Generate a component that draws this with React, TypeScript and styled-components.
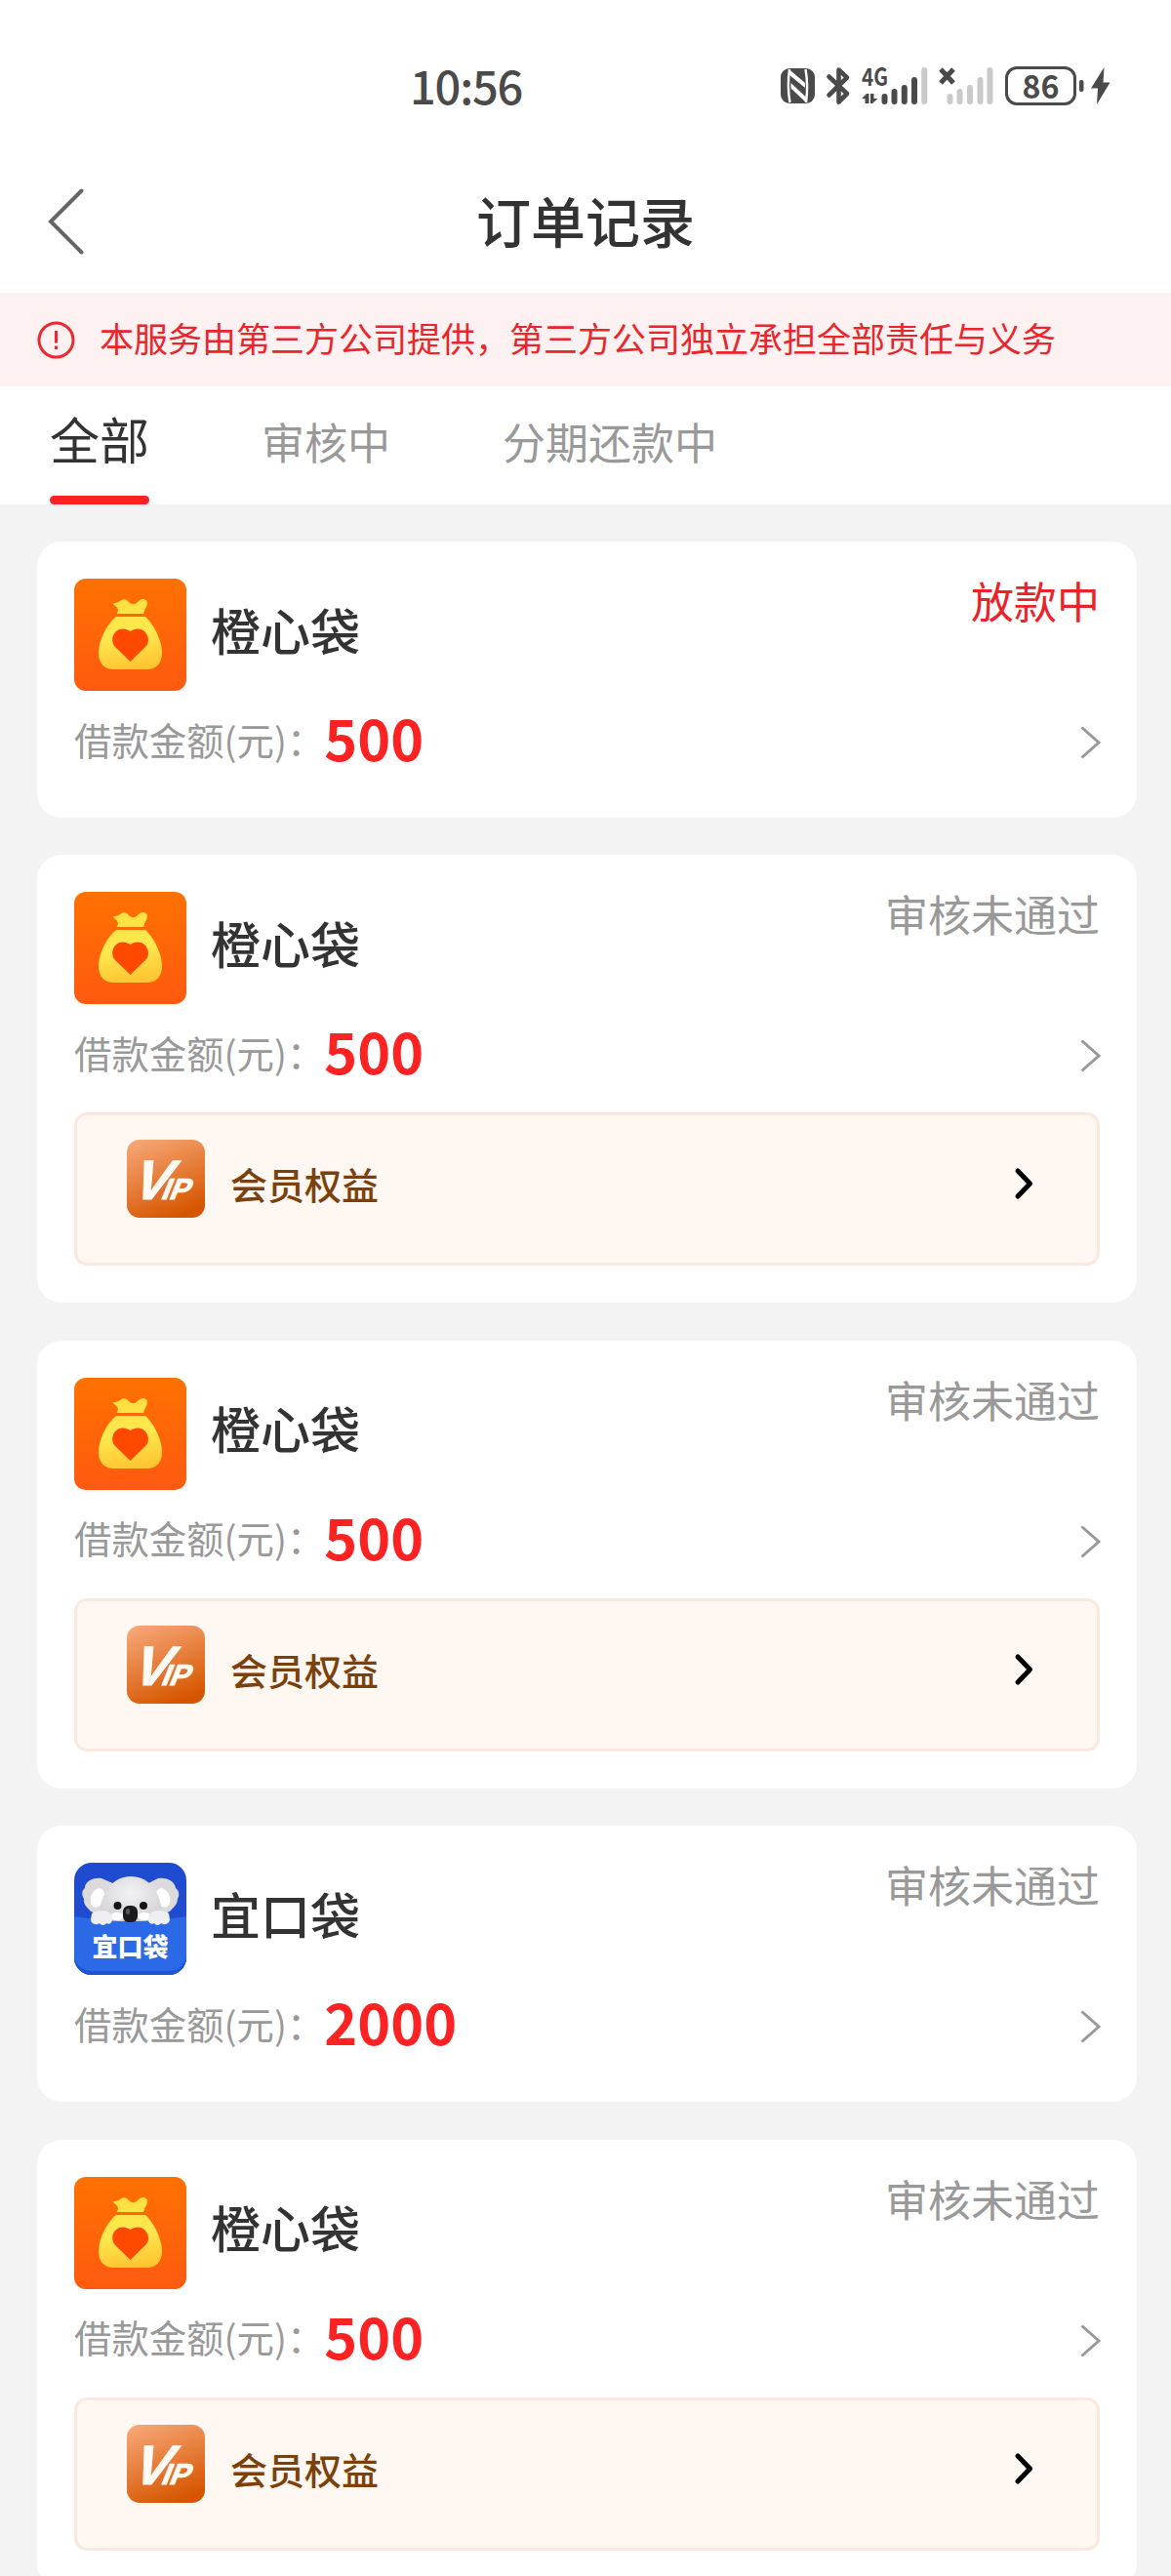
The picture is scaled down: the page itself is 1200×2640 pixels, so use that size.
import styled, { createGlobalStyle } from 'styled-components'

interface Order {
    id: number;
    brand: 'orange' | 'koala';
    name: string;
    amount: number;
    status: string;
    // the order is still moving, so its status is shown in red
    active?: boolean;
    hasBenefits?: boolean;
}

const orders: Order[] = [
    { id: 1, brand: 'orange', name: '橙心袋', amount: 500, status: '放款中', active: true },
    { id: 2, brand: 'orange', name: '橙心袋', amount: 500, status: '审核未通过', hasBenefits: true },
    { id: 3, brand: 'orange', name: '橙心袋', amount: 500, status: '审核未通过', hasBenefits: true },
    { id: 4, brand: 'koala', name: '宜口袋', amount: 2000, status: '审核未通过' },
    { id: 5, brand: 'orange', name: '橙心袋', amount: 500, status: '审核未通过', hasBenefits: true },
];

const tabs = ['全部', '审核中', '分期还款中'];

const NfcIcon = () => (
    <svg width="35" height="36" viewBox="0 0 35 36">
        <rect width="35" height="36" rx="9" fill="#4a4a4a" />
        <path d="M9 1C7.500 12 7.500 24 9.500 35M25.500 1C27.500 12 27.500 24 26 35" fill="none" stroke="#fff" strokeWidth="2.400" />
        <path d="M8.500 1L25 15V20L8.500 6.500ZM10.500 15L26.500 30V35.500L10.500 20.500Z" fill="#fff" />
    </svg>
)

const BluetoothIcon = () => (
    <svg width="24" height="38" viewBox="0 0 24 38">
        <path
            d="M2.500 9.500L21 27L12.500 35.500V2.500L21 10.500L2.500 28.500"
            fill="none" stroke="#4a4a4a" strokeWidth="4.600" strokeLinejoin="round" strokeLinecap="round"
        />
    </svg>
)

const MobileSignal = () => (
    <svg width="68" height="38" viewBox="0 0 68 38">
        <StatusGlyphs x="0" y="18.500" fontSize="25" textLength="27" lengthAdjust="spacingAndGlyphs">4G</StatusGlyphs>
        <path d="M0 32L5 27H7.500V37H3.500V32ZM9 27H12.500V32H16.500L11 37H9Z" fill="#4a4a4a" />
        <g strokeWidth="6" strokeLinecap="round" stroke="#4a4a4a">
            <path d="M23.500 30V35M33.500 25V35M43.800 21V35M54 13V35" />
            <path d="M64.300 3V35" stroke="#cacaca" />
        </g>
    </svg>
)

const NoSignal = () => (
    <svg width="55" height="38" viewBox="0 0 55 38">
        <path d="M1 2L14 16M14 2L1 16" stroke="#4a4a4a" strokeWidth="5" />
        <path
            d="M10.500 30V35M20.500 25V35M31 21V35M41.500 13V35M51.500 3V35"
            stroke="#cacaca" strokeWidth="6" strokeLinecap="round"
        />
    </svg>
)

const BatteryIcon = () => (
    <svg width="108" height="40" viewBox="0 0 108 40">
        <rect x="1.500" y="1.500" width="70" height="37" rx="10.500" fill="none" stroke="#4a4a4a" strokeWidth="3" />
        <StatusGlyphs x="17.500" y="32.500" fontSize="33" textLength="38" lengthAdjust="spacingAndGlyphs">86</StatusGlyphs>
        <rect x="76" y="14" width="4.500" height="12" rx="2" fill="#4a4a4a" />
        <path d="M101.500 1L88 22.500H95L94 39L107.500 16.500H100.500Z" fill="#4a4a4a" />
    </svg>
)

const MoneyBagLogo = () => (
    <BrandLogo viewBox="0 0 115 115">
        <defs>
            <linearGradient id="orangeBg" x1="0" y1="0" x2="0" y2="1">
                <stop offset="0" stopColor="#ff7100" />
                <stop offset="1" stopColor="#ff5a10" />
            </linearGradient>
            <linearGradient id="bag" gradientUnits="userSpaceOnUse" x1="50" y1="21" x2="62" y2="93">
                <stop offset="0" stopColor="#ffdf3e" />
                <stop offset="0.500" stopColor="#ffe94f" />
                <stop offset="1" stopColor="#ffc431" />
            </linearGradient>
        </defs>
        <rect width="115" height="115" rx="12" fill="url(#orangeBg)" />
        <path
            d="M44 36L45 32C44 29 42 28 39.500 25.500C43 24.500 45 24.500 47 23C50 20.500 53 20.500 55.500 23.500C59 27 62 27 65 24C68 20.500 72 20 74.500 23C76 27 73 30 72 33L71 36Z"
            fill="url(#bag)"
        />
        <path
            d="M43 39H73C81 46 90 63 90 76C90 87 84 93 74 93H41C31 93 25 87 25 76C25 63 34 46 43 39Z"
            fill="url(#bag)"
        />
        <path d="M57.500 54C53 50.500 46 50.500 42 55C38 60 38.500 66 42 70L57.500 85L73 70C77 66 77 60 73 55C69 50.500 62 50.500 57.500 54Z" fill="#ff4800" />
    </BrandLogo>
)

const KoalaLogo = () => (
    <BrandLogo viewBox="0 0 115 115">
        <defs>
            <clipPath id="koalaClip"><rect width="115" height="115" rx="18" /></clipPath>
            <radialGradient id="fur" cx="0.500" cy="0.350" r="0.700">
                <stop offset="0" stopColor="#f3f2f3" />
                <stop offset="1" stopColor="#cfcdd2" />
            </radialGradient>
        </defs>
        <g clipPath="url(#koalaClip)">
            <rect width="115" height="115" fill="#1e4bd0" />
            <path
                d="M28 16C18 15 11 20 11 26C7 29 8 34 10 37C9 43 14 46 16 49C22 54 32 52 36 46L42 22ZM86 16C97 15 103 20 104 26C108 29 108 34 106 37C106 43 101 46 99 49C93 54 83 52 79 46L74 22Z"
                fill="#dcdadd"
            />
            <ellipse cx="24" cy="36" rx="7" ry="10" fill="#fff" transform="rotate(20 24 36)" />
            <ellipse cx="91" cy="36" rx="7" ry="10" fill="#fff" transform="rotate(-20 91 36)" />
            <path d="M26 62C24 34 38 14 58 14C79 14 92 34 90 62Z" fill="url(#fur)" />
            <ellipse cx="44" cy="55" rx="7" ry="4" fill="#fff" />
            <ellipse cx="72" cy="55" rx="7" ry="4" fill="#fff" />
            <circle cx="44.500" cy="44" r="4" fill="#151515" />
            <circle cx="71" cy="44" r="4" fill="#151515" />
            <path d="M0 55Q28 59 45 60H70Q90 59 115 55V115H0Z" fill="#2c69e6" />
            <rect x="50" y="44" width="15" height="17" rx="6" fill="#1b1b1d" />
            <rect x="53" y="47" width="4" height="6" rx="2" fill="#58585c" />
            <path d="M0 97Q4 111 20 111H95Q111 111 115 97V115H0Z" fill="#1f55d4" />
            <path
                d="M18 52C25 47 36 48 39 55C40 62 36 64 33 62C31 65 27 64 26 62C22 65 17 62 17 58ZM97 52C90 47 79 48 76 55C75 62 79 64 82 62C84 65 88 64 89 62C93 65 98 62 98 58Z"
                fill="#efeef1"
            />
            <LogoText x="57.500" y="96" fontSize="26" textAnchor="middle">宜口袋</LogoText>
        </g>
    </BrandLogo>
)

const VipIcon = () => (
    <VipBadge viewBox="0 0 80 80">
        <defs>
            <linearGradient id="vipBg" x1="0.200" y1="0" x2="0.600" y2="1">
                <stop offset="0" stopColor="#f6a574" />
                <stop offset="1" stopColor="#d65600" />
            </linearGradient>
        </defs>
        <rect width="80" height="80" rx="13" fill="url(#vipBg)" />
        <VipText fontSize="57" transform="translate(2 61) skewX(-22)">
            V<tspan dx="-6" fontSize="30">IP</tspan>
        </VipText>
    </VipBadge>
)

const OrderCard = (props: { order: Order }) => {
    const { order } = props;

    return (
        <Card>
            <CardHead>
                {order.brand === 'orange' ? <MoneyBagLogo /> : <KoalaLogo />}
                <OrderName>{order.name}</OrderName>
                <OrderStatus $active={order.active}>{order.status}</OrderStatus>
            </CardHead>
            <AmountRow>
                <AmountLabel>借款金额(元)：</AmountLabel>
                <Amount>{order.amount}</Amount>
                <svg width="20" height="34" viewBox="0 0 20 34">
                    <path d="M1.500 1.500L19 17L1.500 32.500" fill="none" stroke="#999" strokeWidth="3" />
                </svg>
            </AmountRow>
            {order.hasBenefits &&
                <BenefitsBox>
                    <VipIcon />
                    <BenefitsText>会员权益</BenefitsText>
                    <svg width="18" height="32" viewBox="0 0 18 32">
                        <path d="M3 3L15.500 16L3 29" fill="none" stroke="#000" strokeWidth="5" strokeLinecap="round" strokeLinejoin="round" />
                    </svg>
                </BenefitsBox>}
        </Card>
    )
}

const App = () => {
    return (
        <>
            <GlobalStyle />
            <Screen>
                <StatusBar>
                    <Clock>10:56</Clock>
                    <StatusIcons>
                        <NfcIcon />
                        <BluetoothIcon />
                        <MobileSignal />
                        <NoSignal />
                        <BatteryIcon />
                    </StatusIcons>
                </StatusBar>
                <Header>
                    <svg width="37" height="68" viewBox="0 0 37 68">
                        <path d="M34.500 2.500L3 34L34.500 65.500" fill="none" stroke="#666" strokeWidth="4" strokeLinecap="round" />
                    </svg>
                    <Title>订单记录</Title>
                </Header>
                <Notice>
                    <svg width="39" height="39" viewBox="0 0 39 39">
                        <circle cx="19.500" cy="19.500" r="17.500" fill="none" stroke="#e92a30" strokeWidth="3" />
                        <path d="M19.500 10V22.500M19.500 25.500V29" stroke="#e92a30" strokeWidth="3" />
                    </svg>
                    <NoticeText>本服务由第三方公司提供，第三方公司独立承担全部责任与义务</NoticeText>
                </Notice>
                <Tabs>
                    {tabs.map((tab, index) =>
                        <Tab key={tab} $selected={index === 0}>{tab}</Tab>
                    )}
                </Tabs>
                <OrderList>
                    {orders.map((order) => <OrderCard key={order.id} order={order} />)}
                </OrderList>
            </Screen>
        </>
    )
}

export default App

const GlobalStyle = createGlobalStyle`
    * {
        box-sizing: border-box;
    }

    body {
        margin: 0;
        background: #f3f3f3;
        font-family: 'Noto Sans CJK SC', 'Noto Sans', sans-serif;
    }

    svg {
        display: block;
        flex-shrink: 0;
        overflow: visible;
    }
`

const Screen = styled.div`
    width: 1200px;
    height: 2640px;
    overflow: hidden;
    background: #f3f3f3;
    color: #333;
`

const StatusBar = styled.div`
    height: 176px;
    padding: 0 62px 0 420px;
    display: flex;
    align-items: center;
    justify-content: space-between;
    background: #fff;
`

const Clock = styled.div`
    padding-bottom: 2px;
    color: #4a4a4a;
    font-size: 47px;
    font-weight: 500;
    letter-spacing: -1.200px;
    line-height: 60px;
`

const StatusIcons = styled.div`
    display: flex;
    align-items: center;
    gap: 12px;
`

const StatusGlyphs = styled.text`
    fill: #4a4a4a;
    font-weight: 700;
`

const Header = styled.div`
    height: 124px;
    padding: 0 49px 22px;
    display: flex;
    align-items: center;
    background: #fff;
`

const Title = styled.div`
    flex-grow: 1;
    padding: 0 37px 5px 0;
    text-align: center;
    font-size: 56px;
    font-weight: 500;
    line-height: 70px;
`

const Notice = styled.div`
    height: 96px;
    padding: 0 38px;
    display: flex;
    align-items: center;
    gap: 25px;
    background: #fef1f1;
`

const NoticeText = styled.div`
    padding-bottom: 4px;
    color: #e8262c;
    font-size: 35px;
    line-height: 50px;
    white-space: nowrap;
`

const Tabs = styled.div`
    height: 121px;
    padding: 0 51px;
    display: flex;
    gap: 115px;
    background: #fff;
`

const Tab = styled.div<{ $selected: boolean }>`
    display: flex;
    flex-direction: column;
    justify-content: space-between;
    color: ${props => props.$selected ? '#333' : '#999'};
    font-size: ${props => props.$selected ? '51px' : '44px'};
    line-height: ${props => props.$selected ? '107px' : '113px'};

    &::after {
        content: '';
        height: ${props => props.$selected ? '9px' : '0'};
        border-radius: 5px;
        background: #fb2226;
    }
`

const OrderList = styled.div`
    padding: 38px 35px 0 38px;
    display: flex;
    flex-direction: column;
    gap: 38.400px;
`

const Card = styled.div`
    padding: 38px;
    border-radius: 25px;
    background: #fff;
`

const CardHead = styled.div`
    height: 115px;
    display: flex;
    align-items: center;
`

const BrandLogo = styled.svg`
    width: 115px;
    height: 115px;
`

const LogoText = styled.text`
    fill: #fff;
    font-weight: 900;
`

const VipBadge = styled.svg`
    width: 80px;
    height: 80px;
    margin-bottom: 10px;
`

const VipText = styled.text`
    fill: #fffaf4;
    stroke: #fffaf4;
    stroke-width: 1px;
    font-family: 'Liberation Sans', sans-serif;
    font-weight: 700;
`

const OrderName = styled.div`
    flex-grow: 1;
    padding: 0 0 12px 25px;
    font-size: 51px;
    font-weight: 500;
    line-height: 60px;
`

const OrderStatus = styled.div<{ $active?: boolean }>`
    align-self: flex-start;
    color: ${props => props.$active ? '#ea2328' : '#999'};
    font-size: 44px;
    line-height: 44px;
`

const AmountRow = styled.div`
    height: 92px;
    padding-top: 14px;
    display: flex;
    align-items: center;
`

const AmountLabel = styled.div`
    padding-bottom: 9px;
    color: #999;
    font-size: 38.400px;
    line-height: 50px;
`

const Amount = styled.div`
    flex-grow: 1;
    padding-bottom: 12px;
    color: #ff2222;
    font-size: 57.600px;
    font-weight: 700;
    line-height: 60px;
`

const BenefitsBox = styled.div`
    height: 157px;
    margin-top: 19px;
    padding: 0 66px 11px 51px;
    display: flex;
    align-items: center;
    border: 3px solid #fbe9df;
    border-radius: 13px;
    background: #fef7f2;
`

const BenefitsText = styled.div`
    flex-grow: 1;
    padding-left: 26px;
    color: #7c410b;
    font-size: 38px;
    font-weight: 500;
    line-height: 50px;
`
